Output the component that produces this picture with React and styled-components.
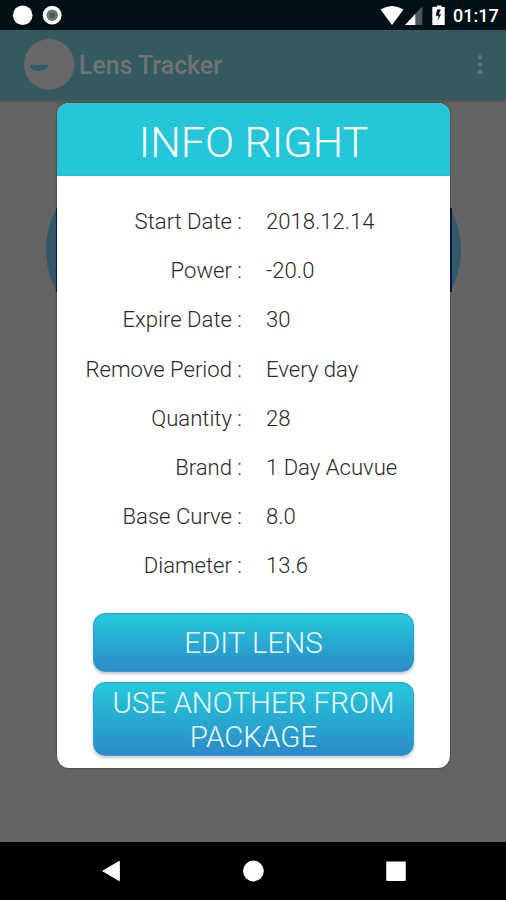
import React from 'react'
import styled, { createGlobalStyle } from 'styled-components'

const GlobalStyle = createGlobalStyle`
  * {
    box-sizing: border-box;
  }
  body {
    margin: 0;
    background: #646464;
    font-family: Roboto, 'Liberation Sans', sans-serif;
  }
`

const Screen = styled.div`
  position: relative;
  display: flex;
  flex-direction: column;
  width: 506px;
  height: 900px;
  overflow: hidden;
  background: #646464;
`

const StatusBar = styled.div`
  display: flex;
  align-items: center;
  height: 30px;
  padding: 0 9px 0 12px;
  background: #001014;
  color: #fff;
`

const Spacer = styled.div`
  flex: 1;
`

const Clock = styled.div`
  width: 45px;
  padding: 1px 0 0 1px;
  font-size: 18px;
  font-weight: 500;
  line-height: 30px;
  white-space: nowrap;
`

const AppBar = styled.div`
  display: flex;
  align-items: center;
  height: 70px;
  padding: 0 20px 0 23px;
  background: #34595e;
  box-shadow: 0 1px 3px rgba(0, 0, 0, 0.3);
`

const AppTitle = styled.div`
  margin-left: 4px;
  padding-top: 1px;
  color: #717475;
  font-size: 24.9px;
  font-weight: 500;
  line-height: 30px;
  white-space: nowrap;
`

const Content = styled.div`
  flex: 1;
  display: flex;
  justify-content: space-between;
  align-items: flex-start;
  padding: 64px 45px 0 46px;
`

const Lens = styled.div`
  width: 172px;
  height: 172px;
  border-radius: 50%;
  background: #34576a;
`

const NavBar = styled.div`
  display: flex;
  justify-content: space-between;
  align-items: center;
  height: 58px;
  padding: 0 99px 0 101px;
  background: #000;
`

const Overlay = styled.div`
  position: absolute;
  top: 103px;
  left: 57px;
  width: 393px;
`

const Modal = styled.div`
  display: flex;
  flex-direction: column;
  height: 665px;
  border-radius: 12px;
  background: #fff;
  box-shadow: 0 0 2px rgba(0, 0, 0, 0.65);
  overflow: hidden;
`

// sides of the lens circles darken right at the modal border
const EdgeShade = styled.div`
  position: absolute;
  top: 105px;
  left: -1.5px;
  width: 396px;
  height: 84px;
  background: #061b4e;
`

const ModalFront = styled.div`
  position: relative;
`

const ModalHeader = styled.div`
  height: 73px;
  border-bottom: 1px solid #1fbfd4;
  background: #26c6da;
  color: #fff;
  font-size: 43px;
  font-weight: 300;
  line-height: 78px;
  text-align: center;
  white-space: nowrap;
`

const InfoList = styled.div`
  padding-top: 21px;
`

const Row = styled.div`
  display: flex;
  height: 49.2px;
  color: #2a2a2a;
  font-size: 22.1px;
  font-weight: 300;
  line-height: 49px;
  white-space: nowrap;
`

const Label = styled.div`
  width: 185px;
  text-align: right;
`

const Value = styled.div`
  margin-left: 24px;
`

const Buttons = styled.div`
  display: flex;
  flex-direction: column;
  gap: 10px;
  padding: 22px 36px 0 36px;
`

const Button = styled.button`
  display: block;
  width: 321px;
  height: ${p => p.$height}px;
  padding: 2px 0 0;
  border: 1px solid #2f9bce;
  border-radius: 12px;
  background: linear-gradient(#26c6da 5%, #2b8bc8);
  box-shadow: 0 2px 3px rgba(0, 0, 0, 0.22);
  color: #e9fbff;
  font-family: inherit;
  font-size: 29.5px;
  font-weight: 300;
  line-height: 34px;
  text-align: center;
`

const info = [
  ['Start Date', '2018.12.14'],
  ['Power', '-20.0'],
  ['Expire Date', '30'],
  ['Remove Period', 'Every day'],
  ['Quantity', '28'],
  ['Brand', '1 Day Acuvue'],
  ['Base Curve', '8.0'],
  ['Diameter', '13.6'],
]

function NotificationIcons() {
  return (
    <svg width='52' height='30' viewBox='0 0 52 30'>
      <circle cx='10.7' cy='15.2' r='9.8' fill='#fff' />
      <circle cx='40.2' cy='15.2' r='9.4' fill='#fff' />
      <circle cx='40.2' cy='15.2' r='5.8' fill='#6c7977' />
      <circle cx='40.2' cy='15.2' r='3' fill='#4b5b59' />
    </svg>
  )
}

function SystemIcons() {
  return (
    <svg width='72' height='30' viewBox='0 0 72 30'>
      <path d='M0.5 9.5 Q12 2.5 23.5 9.5 L12 25 Z' fill='#fff' />
      <path d='M42.3 6.5 V25 H25 Z' fill='#4a595b' />
      <path d='M35.3 14 V25 H25 Z' fill='#fff' />
      <path d='M55 6.8 H57 V5.5 H61.5 V7 H64.7 V25 H52.3 V7 Z' fill='#fff' />
      <path d='M60.8 9.5 H57 L55.8 15.7 H58.6 L57.4 20.8 L61.2 14.2 H58.8 Z' fill='#001014' />
    </svg>
  )
}

function Logo() {
  return (
    <svg width='52' height='52' viewBox='0 0 52 52'>
      <circle cx='26.2' cy='25.4' r='25.3' fill='#686868' />
      <path d='M7 26.5 Q16 25.2 25.5 26 Q24.5 27.5 22.5 30.5 Q20 32.4 14 31.8 Q7.5 31 7 26.5 Z' fill='#2f5c69' />
    </svg>
  )
}

function MenuDots() {
  return (
    <svg width='12' height='24' viewBox='0 0 12 24'>
      <circle cx='6' cy='4.2' r='2.2' fill='#6e7173' />
      <circle cx='6' cy='11.5' r='2.2' fill='#6e7173' />
      <circle cx='6' cy='19' r='2.2' fill='#6e7173' />
    </svg>
  )
}

function App() {
  return (
    <>
      <GlobalStyle />
      <Screen>
        <StatusBar>
          <NotificationIcons />
          <Spacer />
          <SystemIcons />
          <Clock>01:17</Clock>
        </StatusBar>
        <AppBar>
          <Logo />
          <AppTitle>Lens Tracker</AppTitle>
          <Spacer />
          <MenuDots />
        </AppBar>
        <Content>
          <Lens />
          <Lens />
        </Content>
        <NavBar>
          <svg width='20' height='22' viewBox='0 0 20 22'>
            <path d='M18.3 1.3 V20.7 L1.8 11 Z' fill='#fff' stroke='#fff' strokeLinejoin='round' />
          </svg>
          <svg width='22' height='22' viewBox='0 0 22 22'>
            <circle cx='11.4' cy='11' r='10.4' fill='#fff' />
          </svg>
          <svg width='22' height='22' viewBox='0 0 22 22'>
            <rect x='1.2' y='1.5' width='19.6' height='19.5' rx='1' fill='#fff' />
          </svg>
        </NavBar>
        <Overlay>
          <EdgeShade />
          <ModalFront>
            <Modal>
              <ModalHeader>INFO RIGHT</ModalHeader>
              <InfoList>
                {info.map(([label, value]) => (
                  <Row key={label}>
                    <Label>{label} :</Label>
                    <Value>{value}</Value>
                  </Row>
                ))}
              </InfoList>
              <Buttons>
                <Button $height={59}>EDIT LENS</Button>
                <Button $height={74}>
                  USE ANOTHER FROM
                  <br />
                  PACKAGE
                </Button>
              </Buttons>
            </Modal>
          </ModalFront>
        </Overlay>
      </Screen>
    </>
  )
}

export default App
